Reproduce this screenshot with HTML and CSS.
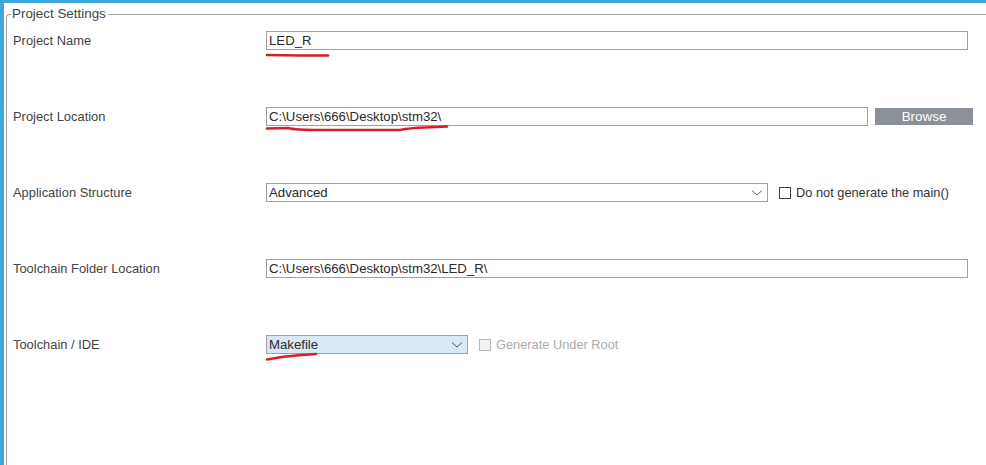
FILE: index.html
```html
<!DOCTYPE html>
<html>
<head>
<meta charset="utf-8">
<link rel="stylesheet" href="styles.css">
</head>
<body>
<div class="topbar"></div>
<div class="page">
  <div class="strip"></div>
  <fieldset class="settings">
    <legend>Project Settings</legend>
    <div class="row">
      <div class="label">Project Name</div>
      <div class="field w702"><span class="val">LED_R</span></div>
    </div>
    <div class="row">
      <div class="label">Project Location</div>
      <div class="controls">
        <div class="field w602"><span class="val">C:\Users\666\Desktop\stm32\</span></div>
        <div class="browse">Browse</div>
      </div>
    </div>
    <div class="row">
      <div class="label">Application Structure</div>
      <div class="controls">
        <div class="field select w502"><span class="val">Advanced</span><svg class="chev" width="12" height="8" viewBox="0 0 12 8"><path d="M1 1.5 L6 6 L11 1.5" fill="none" stroke="#666" stroke-width="1"/></svg></div>
        <label class="check"><span class="box"></span>Do not generate the main()</label>
      </div>
    </div>
    <div class="row">
      <div class="label">Toolchain Folder Location</div>
      <div class="field w702"><span class="val">C:\Users\666\Desktop\stm32\LED_R\</span></div>
    </div>
    <div class="row">
      <div class="label">Toolchain / IDE</div>
      <div class="controls">
        <div class="field select w202 selected"><span class="val">Makefile</span><svg class="chev" width="12" height="8" viewBox="0 0 12 8"><path d="M1 1.5 L6 6 L11 1.5" fill="none" stroke="#555" stroke-width="1"/></svg></div>
        <label class="check disabled"><span class="box"></span>Generate Under Root</label>
      </div>
    </div>
    <div class="filler"></div>
  </fieldset>
</div>
<svg class="marks" width="986" height="465" viewBox="0 0 986 465">
  <path d="M267 55 L300 55.5 L328 55.5" fill="none" stroke="#d81e2a" stroke-width="2.6" stroke-linecap="round"/>
  <path d="M267 128.5 L288 128 Q295 130 320 130 L400 130 Q410 128 425 127.5 L447 126.5" fill="none" stroke="#d81e2a" stroke-width="2.6" stroke-linecap="round"/>
  <path d="M267 359.5 Q282 356.5 296 355.5 L316 354" fill="none" stroke="#d81e2a" stroke-width="2.6" stroke-linecap="round"/>
</svg>
</body>
</html>
```
FILE: styles.css
```css
html, body {
  margin: 0;
  padding: 0;
  background: #fff;
  width: 986px;
  height: 465px;
  overflow: hidden;
  font-family: "Liberation Sans", Arial, sans-serif;
  font-size: 13px;
  color: #444;
}
.topbar {
  height: 3px;
  background: #3ea8dc;
}
.page {
  display: flex;
  height: 462px;
}
.strip {
  width: 4px;
  background: #3ea8dc;
  margin-right: 2px;
  flex: none;
}
.settings {
  flex: 1;
  margin: 3px 0 0 0;
  padding: 3px 0 0 6px;
  border: 1px solid #a4a4a4;
  border-right: none;
  border-top-left-radius: 4px;
  border-bottom-left-radius: 3px;
  display: flex;
  flex-direction: column;
  gap: 57px;
  min-width: 0;
  height: 461px;
  box-sizing: border-box;
}
.settings legend {
  padding: 0 2px 0 1px;
  margin-left: -2px;
  line-height: 16px;
  font-size: 13.4px;
  color: #444;
}
.row {
  display: flex;
  align-items: center;
  height: 19px;
  flex: none;
}
.row:first-of-type {
  margin-top: 6px;
}
.label {
  width: 253px;
  flex: none;
  color: #444;
  font-size: 12.9px;
}
.controls {
  display: flex;
  align-items: center;
}
.field {
  box-sizing: border-box;
  height: 19px;
  border: 1px solid #a0a0a0;
  display: flex;
  align-items: center;
  padding-left: 2px;
  color: #2a2a2a;
  background: #fff;
  font-size: 13.2px;
}
.w702 { width: 702px; }
.w602 { width: 602px; }
.w502 { width: 502px; }
.w202 { width: 202px; }
.select {
  justify-content: space-between;
  padding-right: 4px;
}
.select .chev {
  flex: none;
}
.selected {
  background: #d7e8f6;
}
.browse {
  margin-left: 7px;
  width: 98px;
  height: 17px;
  background: #8a9198;
  color: #fff;
  display: flex;
  align-items: center;
  justify-content: center;
  font-size: 13.4px;
}
.check {
  display: flex;
  align-items: center;
  margin-left: 11px;
  color: #333;
  font-size: 12.8px;
}
.check .box {
  box-sizing: border-box;
  width: 12px;
  height: 12px;
  border: 1px solid #444;
  margin-right: 5px;
  background: #fff;
}
.check.disabled {
  color: #acacac;
}
.check.disabled .box {
  border-color: #b8b8b8;
  background: #f2f2f2;
}
.filler {
  flex: 1;
}
.marks {
  position: absolute;
  left: 0;
  top: 0;
  pointer-events: none;
}
```
